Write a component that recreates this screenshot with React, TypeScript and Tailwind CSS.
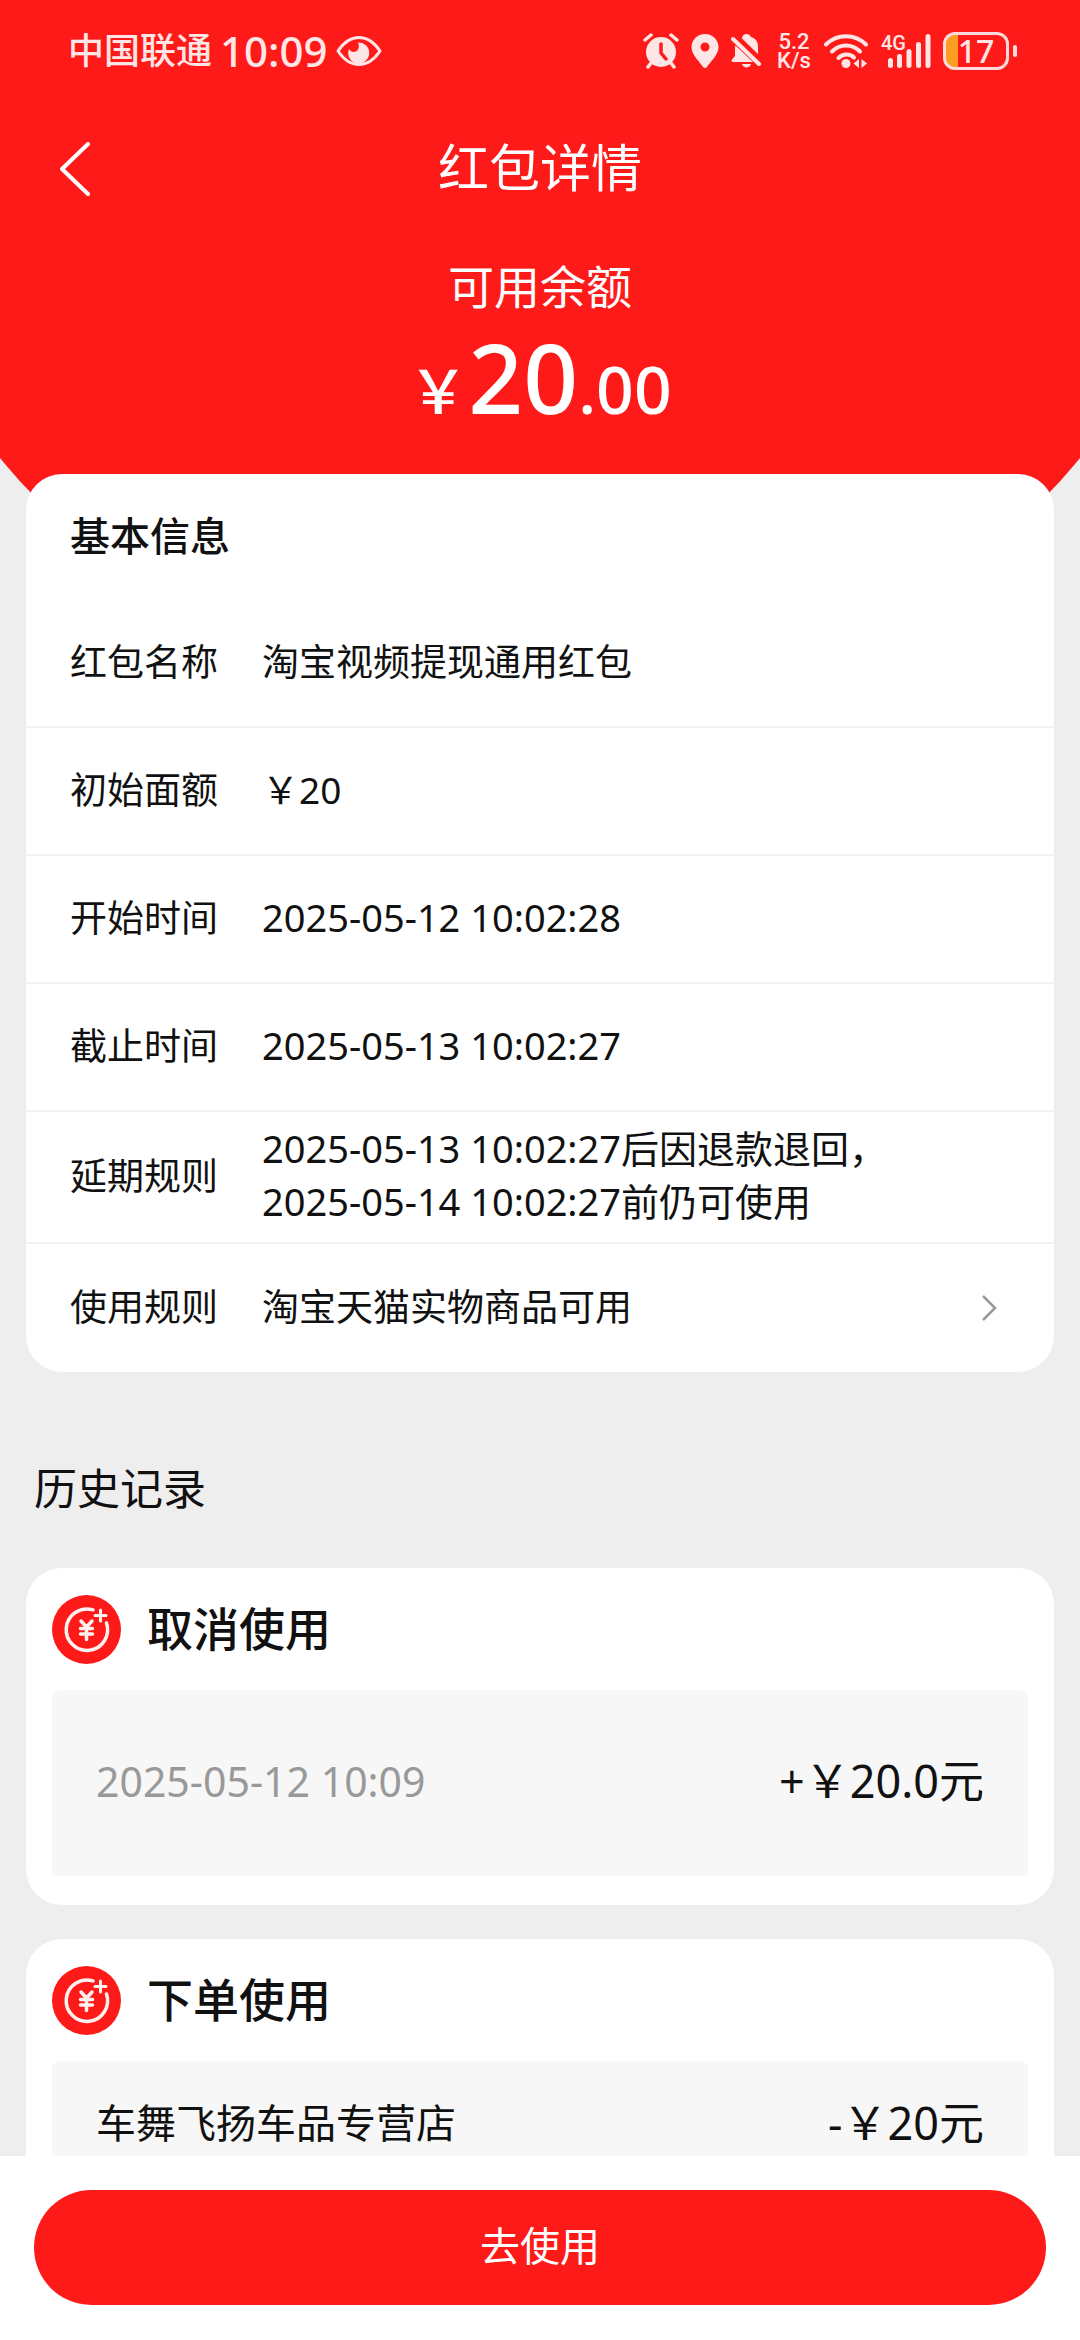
import React from "react";

type Row = {
  label: string;
  value: string[];
  link?: boolean;
};

const rows: Row[] = [
  { label: "红包名称", value: ["淘宝视频提现通用红包"] },
  { label: "初始面额", value: ["￥20"] },
  { label: "开始时间", value: ["2025-05-12 10:02:28"] },
  { label: "截止时间", value: ["2025-05-13 10:02:27"] },
  {
    label: "延期规则",
    value: ["2025-05-13 10:02:27后因退款退回，", "2025-05-14 10:02:27前仍可使用"],
  },
  { label: "使用规则", value: ["淘宝天猫实物商品可用"], link: true },
];

const StatusBar = () => {
  return (
    <div className="flex h-[102px] items-center justify-between pl-[68px] pr-[63px] text-[#ffe6e6]">
      <div className="flex items-center">
        <span className="text-[36px] font-medium leading-[48px]">中国联通</span>
        <span className="ml-2 text-[42px] font-medium leading-[48px]">10:09</span>
        <svg className="ml-2 h-[32px] w-[46px]" viewBox="0 0 46 32" fill="none">
          <path
            d="M2 16C8 7 15 2.500 23 2.500S38 7 44 16C38 25 31 29.500 23 29.500S8 25 2 16Z"
            stroke="currentColor"
            strokeWidth="3"
            strokeLinejoin="round"
          />
          <path
            d="M22 7.500A10.500 10.500 0 1 1 13 14C15 17.500 20 18 22 14.500C23.300 12 23 9.500 22 7.500Z"
            fill="currentColor"
          />
        </svg>
      </div>
      <div className="flex items-center">
        <svg className="h-[36px] w-[36px]" viewBox="0 0 36 36" fill="none">
          <circle cx="18" cy="19" r="15" fill="currentColor" />
          <path
            d="M2 7L8 2M34 7L28 2M8 30L5 34M28 30L31 34"
            stroke="currentColor"
            strokeWidth="3.500"
            strokeLinecap="round"
          />
          <path
            d="M18 11V20L23 26"
            stroke="#ff1a1a"
            strokeWidth="3.500"
            strokeLinecap="round"
            strokeLinejoin="round"
          />
        </svg>
        <svg className="ml-3 h-[36px] w-[28px]" viewBox="0 0 28 36">
          <path
            d="M14 1C6.500 1 .5 6.800 .5 14C.5 22 9 29 12 34Q14 36 16 34C19 29 27.500 22 27.500 14C27.500 6.800 21.500 1 14 1ZM14 9.500A4.500 4.500 0 1 1 14 18.500A4.500 4.500 0 1 1 14 9.500Z"
            fill="currentColor"
            fillRule="evenodd"
          />
        </svg>
        <svg className="ml-3 h-[36px] w-[30px]" viewBox="0 0 30 36" fill="none">
          <path
            d="M11 4C12 2 13.500 1 15.500 1S19 2 20 4C25 5.500 27 9 27 13.500V21L11 5.500ZM4.500 12.500L22 29H2C.5 29 .2 27.500 1 26.500L4 23V15Q4 13.500 4.500 12.500ZM11 31H20C19.500 33.300 17.500 34.500 15.500 34.500S11.500 33.300 11 31Z"
            fill="currentColor"
          />
          <path d="M6 5L30 28" stroke="#ff1a1a" strokeWidth="3" />
          <path d="M2 6L28 31" stroke="currentColor" strokeWidth="4" strokeLinecap="round" />
        </svg>
        <div className="ml-4 flex w-[34px] flex-col items-center font-[Roboto,sans-serif] text-[22px] font-medium leading-[19px]">
          <span>5.2</span>
          <span>K/s</span>
        </div>
        <svg className="ml-3 h-[36px] w-[46px]" viewBox="0 0 46 36" fill="none">
          <path
            d="M3 11.500C14 .5 32 .5 43 11.500M9 18.500C17 10.500 29 10.500 37 18.500M15.500 25C20 20.500 27 20.500 31 24.500"
            stroke="currentColor"
            strokeWidth="4"
            strokeLinecap="round"
          />
          <circle cx="23" cy="30.500" r="4.500" fill="currentColor" />
          <path d="M36 26V35L30.500 30.500ZM38.500 26V35L44 30.500Z" fill="currentColor" />
        </svg>
        <div className="relative ml-3 h-[36px] w-[50px]">
          <span className="absolute left-0 top-0 font-[Roboto,sans-serif] text-[20px] font-medium leading-[20px]">
            4G
          </span>
          <svg className="h-full w-full" viewBox="0 0 50 36">
            <g fill="currentColor">
              <rect x="7" y="25" width="5" height="10" rx="2.500" />
              <rect x="16" y="21" width="5" height="14" rx="2.500" />
              <rect x="25.500" y="16" width="5" height="19" rx="2.500" />
              <rect x="35" y="9" width="5" height="26" rx="2.500" />
              <rect x="44.500" y="1" width="5" height="34" rx="2.500" />
            </g>
          </svg>
        </div>
        <div className="ml-3 flex h-[38px] w-[66px] items-center justify-center rounded-xl border-[3px] border-[#ffd9d9] bg-linear-to-r from-[#fb9d20] from-20% to-[#ff1a1a] to-20% text-[32px] font-medium leading-[32px]">
          17
        </div>
        <div className="ml-1 h-[12px] w-[4px] rounded-full bg-[#ffd9d9]" />
      </div>
    </div>
  );
};

const CoinIcon = () => {
  return (
    <svg className="h-[69px] w-[69px]" viewBox="0 0 69 69" fill="none">
      <circle cx="34.500" cy="34.500" r="34.500" fill="#ff1a1a" />
      <g stroke="#fff1f0" strokeLinecap="round" strokeLinejoin="round">
        <path d="M41 14.900A20.700 20.700 0 1 0 54.500 28" strokeWidth="3.500" />
        <path d="M48.500 15V26M43 20.500H54" strokeWidth="3" />
        <path d="M29 26L34.500 32L40 26M34.500 32V44.500M28.500 33.500H40.500M28.500 39H40.500" strokeWidth="3.500" />
      </g>
    </svg>
  );
};

const InfoRow = ({ label, value, link }: Row) => {
  const hasDate = value[0].includes("-");
  return (
    <li className="flex min-h-[128px] items-center border-b-2 border-[#f3f3f3] pb-1 pl-11 pr-[57px] last:border-b-0">
      <span className="w-[192px] shrink-0 text-[37px] leading-[53px]">{label}</span>
      <div className={hasDate ? "flex-1 py-[10px] text-[38px] leading-[53px]" : "flex-1 text-[37px] leading-[53px]"}>
        {value.map((line) => (
          <p key={line}>{line}</p>
        ))}
      </div>
      {link && (
        <button className="pt-1" aria-label="查看使用规则">
          <svg className="h-[28px] w-[16px]" viewBox="0 0 16 28" fill="none">
            <path d="M2 2L14 14L2 26" stroke="#999" strokeWidth="2.500" />
          </svg>
        </button>
      )}
    </li>
  );
};

const RecordCard = ({ title, children }: { title: string; children: React.ReactNode }) => {
  return (
    <article className="rounded-[36px] bg-white px-[26px] pb-[29px] pt-[27px]">
      <div className="flex items-center gap-[26px]">
        <CoinIcon />
        <h3 className="pb-1 text-[46px] font-medium leading-[64px]">{title}</h3>
      </div>
      {children}
    </article>
  );
};

const App = () => {
  return (
    <div className="relative flex h-screen flex-col overflow-hidden bg-[#eeeeee] font-['Noto_Sans','Noto_Sans_CJK_SC',sans-serif] text-[#111]">
      {/* curved red backdrop behind the header */}
      <div className="absolute -inset-x-[110px] top-0 h-[645px] rounded-b-[500px] bg-[#ff1a1a]" />

      <main className="relative flex-1 overflow-y-auto [scrollbar-width:none]">
        <header className="text-white">
          <StatusBar />
          <div className="grid grid-cols-[1fr_auto_1fr] items-center px-[60px] pt-[28px]">
            <button className="justify-self-start pt-1" aria-label="返回">
              <svg className="h-[54px] w-[30px]" viewBox="0 0 30 54" fill="none">
                <path
                  d="M28 2L2 27L28 52"
                  stroke="currentColor"
                  strokeWidth="4"
                  strokeLinecap="round"
                  strokeLinejoin="round"
                />
              </svg>
            </button>
            <h1 className="text-[51px] leading-[74px]">红包详情</h1>
          </div>
          <div className="flex flex-col items-center pb-4 pt-[48px]">
            <p className="text-[46px] leading-[68px]">可用余额</p>
            <p className="flex h-[114px] items-baseline">
              <span className="text-[60px] font-medium leading-[114px]">￥</span>
              <span className="text-[96px] font-medium leading-[114px]">20</span>
              <span className="text-[66px] font-medium leading-[114px]">.00</span>
            </p>
          </div>
        </header>

        <section className="mx-[26px] mt-6 rounded-[36px] bg-white">
          <h2 className="pl-11 pt-[30px] text-[40px] font-medium leading-[64px]">基本信息</h2>
          <ul className="pt-8">
            {rows.map((row) => (
              <InfoRow key={row.label} {...row} />
            ))}
          </ul>
        </section>

        <section className="px-[26px]">
          <h2 className="pb-[47px] pl-2 pt-[85px] text-[43px] leading-[64px]">历史记录</h2>
          <div className="flex flex-col gap-[34px]">
            <RecordCard title="取消使用">
              <div className="mt-[26px] flex items-center justify-between rounded-lg bg-[#f7f7f7] px-11 pb-[65px] pt-[61px] leading-[60px]">
                <time className="text-[41px] text-[#999]">2025-05-12 10:09</time>
                <span className="text-[45px]">+￥20.0元</span>
              </div>
            </RecordCard>
            <RecordCard title="下单使用">
              <div className="mt-[26px] flex items-center justify-between rounded-lg bg-[#f7f7f7] px-11 pb-[92px] pt-[32px] leading-[60px]">
                <span className="text-[40px]">车舞飞扬车品专营店</span>
                <span className="text-[45px]">-￥20元</span>
              </div>
            </RecordCard>
          </div>
        </section>
      </main>

      <footer className="relative bg-white px-[34px] pb-[35px] pt-[34px]">
        <button className="h-[115px] w-full rounded-full bg-[#ff1a1a] pb-1 text-[40px] text-white">去使用</button>
      </footer>
    </div>
  );
};

export default App;
